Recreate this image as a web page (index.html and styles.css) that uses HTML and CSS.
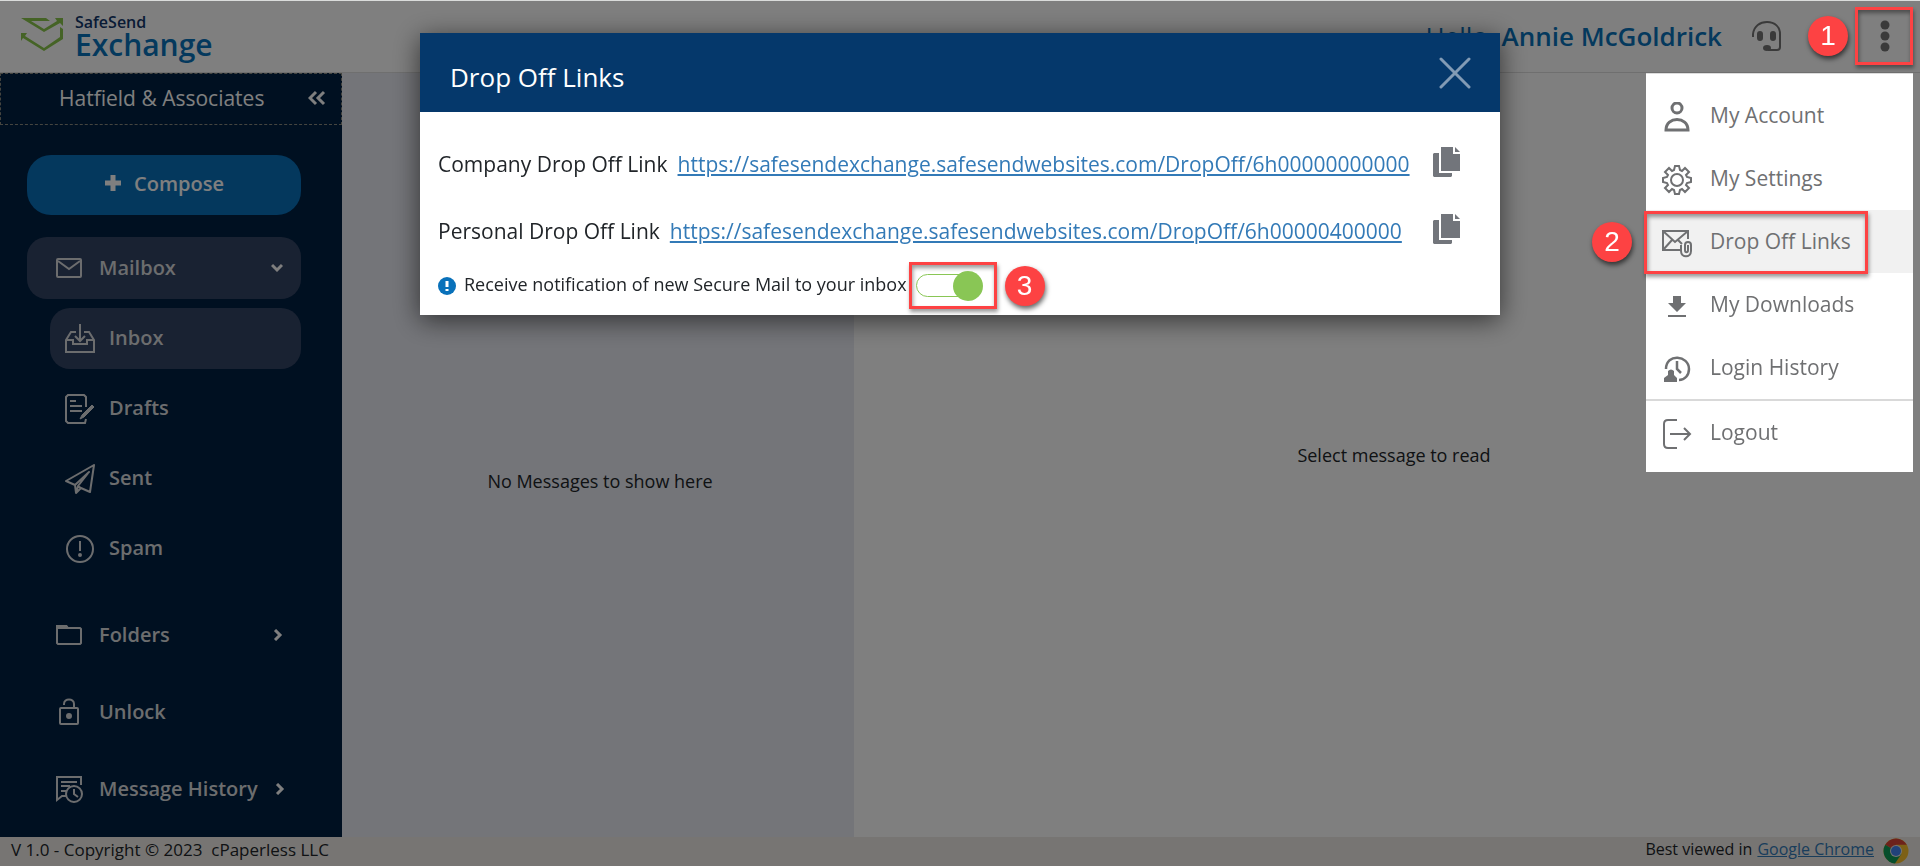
FILE: index.html
```html
<!DOCTYPE html>
<html lang="en">
<head>
    <meta charset="UTF-8">
    <meta name="viewport" content="width=device-width, initial-scale=1.0">
    <title>SafeSend Exchange</title>
    <link rel="stylesheet" href="styles.css">
</head>
<body>
    <div class="app">
        <header class="topbar">
            <a class="logo" href="#">
                <svg class="logo-mark" width="44" height="35" viewBox="0 0 44 35">
                    <path d="M1 1H26L30 4H11L24 12L37 4L35 1H43V9L40 6L24 15Z" fill="#8ac74c"/>
                    <path d="M1 16H7L5 19L24 31L40 20V10L43 12V22L24 34L3 21L1 24Z" fill="#8ac74c"/>
                </svg>
                <span class="logo-text">
                    <span class="logo-small">SafeSend</span>
                    <span class="logo-big">Exchange</span>
                </span>
            </a>
            <div class="user">
                <span class="greeting">Hello, <b>Annie McGoldrick</b></span>
                <button class="icon-btn" type="button" aria-label="Support">
                    <svg width="32" height="32" viewBox="0 0 32 32" fill="none" stroke="#757575" stroke-width="2">
                        <path d="M2 17V14C3 6 9 2 16 2C24 2 29 7 29 14V27C29 29 28 30 26 30H17"/>
                        <rect x="7" y="12" width="4" height="8" rx="2" fill="#757575"/>
                        <rect x="20" y="12" width="4" height="8" rx="2" fill="#757575"/>
                        <ellipse cx="16" cy="28" rx="3" ry="2" fill="#757575"/>
                    </svg>
                </button>
                <button class="icon-btn more" type="button" aria-label="Menu">
                    <svg width="12" height="32" viewBox="0 0 12 32" fill="#757575">
                        <circle cx="6" cy="5" r="4.5"/>
                        <circle cx="6" cy="16" r="4.5"/>
                        <circle cx="6" cy="27" r="4.5"/>
                    </svg>
                </button>
            </div>
        </header>

        <div class="content">
            <nav class="sidebar">
                <div class="company">
                    <span>Hatfield &amp; Associates</span>
                    <button class="icon-btn" type="button" aria-label="Collapse">
                        <svg width="18" height="16" viewBox="0 0 18 16" fill="none" stroke="#fff" stroke-width="3">
                            <path d="M8 2L2 8L8 14M16 2L10 8L16 14"/>
                        </svg>
                    </button>
                </div>

                <button class="compose" type="button">
                    <svg width="18" height="18" viewBox="0 0 18 18" fill="none" stroke="#fff" stroke-width="5">
                        <path d="M9 1V17M1 9H17"/>
                    </svg>
                    Compose
                </button>

                <a class="nav-item active" href="#">
                    <svg class="nav-icon" viewBox="0 0 30 30" fill="none" stroke="currentColor" stroke-width="2">
                        <rect x="3" y="6" width="24" height="18" rx="1"/>
                        <path d="M4 8L15 16L26 8"/>
                    </svg>
                    <span>Mailbox</span>
                    <svg class="arrow" viewBox="0 0 12 12" fill="none" stroke="#fff" stroke-width="3"><path d="M1 3L6 8L11 3"/></svg>
                </a>
                <div class="sub-nav">
                    <a class="nav-item active" href="#">
                        <svg class="nav-icon" viewBox="0 0 30 30" fill="none" stroke="currentColor" stroke-width="2">
                            <path d="M11 8H6L1 16V28H29V16L24 8H19M1 16H8V20H22V16H29M15 0V16M10 12L15 17L20 12"/>
                        </svg>
                        <span>Inbox</span>
                    </a>
                    <a class="nav-item" href="#">
                        <svg class="nav-icon" viewBox="0 0 30 30" fill="none" stroke="currentColor" stroke-width="2">
                            <path d="M21 13V3L19 1H3L1 3V27L3 29H20L21 25M5 7H11M5 12H17M5 17H17"/>
                            <path d="M17 21L27 11L29 13L19 23L15 25Z" fill="currentColor" stroke-width="1"/>
                        </svg>
                        <span>Drafts</span>
                    </a>
                    <a class="nav-item" href="#">
                        <svg class="nav-icon" viewBox="0 0 30 30" fill="none" stroke="currentColor" stroke-width="2" stroke-linejoin="round">
                            <path d="M29 1L1 17L10 21L11 29L16 24L25 28ZM10 21L24 8L13 22L11 29M13 22L16 24"/>
                        </svg>
                        <span>Sent</span>
                    </a>
                    <a class="nav-item" href="#">
                        <svg class="nav-icon" viewBox="0 0 30 30" fill="none" stroke="currentColor" stroke-width="2">
                            <circle cx="15" cy="15" r="13"/>
                            <path d="M15 7V17"/>
                            <circle cx="15" cy="21" r="1" fill="currentColor"/>
                        </svg>
                        <span>Spam</span>
                    </a>
                </div>
                <a class="nav-item" href="#">
                    <svg class="nav-icon" viewBox="0 0 30 30" fill="none" stroke="currentColor" stroke-width="2">
                        <path d="M3 6H12L14 8H26L27 9V23L26 24H4L3 23Z"/>
                        <path d="M3 5H13L15 9H3Z" fill="currentColor" stroke="none"/>
                    </svg>
                    <span>Folders</span>
                    <svg class="arrow" viewBox="0 0 12 12" fill="none" stroke="#fff" stroke-width="3"><path d="M4 1L9 6L4 11"/></svg>
                </a>
                <a class="nav-item" href="#">
                    <svg class="nav-icon" viewBox="0 0 30 30" fill="none" stroke="currentColor" stroke-width="2">
                        <rect x="6" y="11" width="18" height="16" rx="1"/>
                        <path d="M10 8V7C10 1 20 1 20 7V11"/>
                        <circle cx="15" cy="19" r="2" fill="currentColor"/>
                    </svg>
                    <span>Unlock</span>
                </a>
                <a class="nav-item" href="#">
                    <svg class="nav-icon" viewBox="0 0 30 30" fill="none" stroke="currentColor" stroke-width="2">
                        <path d="M27 11V3H3V26L8 22H12M7 8H23M7 12H16M7 17H12"/>
                        <circle cx="20" cy="20" r="8"/>
                        <path d="M20 15V20L24 23"/>
                    </svg>
                    <span>Message History</span>
                    <svg class="arrow" viewBox="0 0 12 12" fill="none" stroke="#fff" stroke-width="3"><path d="M4 1L9 6L4 11"/></svg>
                </a>
            </nav>

            <section class="message-list">No Messages to show here</section>
            <main class="reader">Select message to read</main>
        </div>

        <footer class="footer">
            <span>V 1.0 - Copyright © 2023 &nbsp;cPaperless LLC</span>
            <span class="browser">Best viewed in <a href="#">Google Chrome</a>
                <svg width="26" height="26" viewBox="0 0 26 26">
                    <circle cx="13" cy="13" r="12.5" fill="#fbc02d"/>
                    <path d="M13 13L2.2 6.8A12.5 12.5 0 0 1 23.8 6.8H13Z" fill="#db4437"/>
                    <path d="M13 13L2.2 6.8A12.5 12.5 0 0 0 12 25.5L18.4 16.1Z" fill="#0f9d58"/>
                    <circle cx="13" cy="13" r="6" fill="#e8e8e8"/>
                    <circle cx="13" cy="13" r="5" fill="#4285f4"/>
                </svg>
            </span>
        </footer>
    </div>

    <div class="backdrop"></div>

    <div class="modal" role="dialog" aria-labelledby="modalTitle">
        <div class="modal-header">
            <h1 id="modalTitle">Drop Off Links</h1>
            <button class="icon-btn" type="button" aria-label="Close">
                <svg width="32" height="32" viewBox="0 0 32 32" fill="none" stroke="#829bb5" stroke-width="3" stroke-linecap="round">
                    <path d="M2 2L30 30M30 2L2 30"/>
                </svg>
            </button>
        </div>
        <div class="modal-body">
            <div class="link-row">
                <span>Company Drop Off Link</span>
                <a href="#">https://safesendexchange.safesendwebsites.com/DropOff/6h00000000000</a>
                <button class="icon-btn copy" type="button" aria-label="Copy company link">
                    <svg width="28" height="30" viewBox="0 0 28 30" fill="#72757b">
                        <path d="M8 0H20V7H27V24H8Z"/>
                        <path d="M22 0L27 5H22Z"/>
                        <path d="M1 6H6V26H19V29L18 30H1L0 29V7Z"/>
                    </svg>
                </button>
            </div>
            <div class="link-row">
                <span>Personal Drop Off Link</span>
                <a href="#">https://safesendexchange.safesendwebsites.com/DropOff/6h00000400000</a>
                <button class="icon-btn copy" type="button" aria-label="Copy personal link">
                    <svg width="28" height="30" viewBox="0 0 28 30" fill="#72757b">
                        <path d="M8 0H20V7H27V24H8Z"/>
                        <path d="M22 0L27 5H22Z"/>
                        <path d="M1 6H6V26H19V29L18 30H1L0 29V7Z"/>
                    </svg>
                </button>
            </div>
            <div class="notify-row">
                <svg width="18" height="18" viewBox="0 0 18 18">
                    <circle cx="9" cy="9" r="9" fill="#0971ba"/>
                    <path d="M9 4V10M9 12V14" stroke="#fff" stroke-width="3"/>
                </svg>
                <label for="notify">Receive notification of new Secure Mail to your inbox</label>
                <span class="switch-box highlight">
                    <input class="switch" type="checkbox" id="notify" checked>
                </span>
                <span class="step">3</span>
            </div>
        </div>
    </div>

    <div class="menu">
        <a href="#">
            <svg viewBox="0 0 30 30" fill="none" stroke="currentColor" stroke-width="3">
                <circle cx="15" cy="6" r="5"/>
                <path d="M4 28C4 14 26 14 26 28Z"/>
            </svg>
            My Account
        </a>
        <a href="#">
            <svg viewBox="0 0 30 30" fill="none" stroke="currentColor" stroke-width="2">
                <circle cx="15" cy="15" r="6"/>
                <path d="M13 1H17L18 5L20 6L23 3L27 7L24 10L25 12L29 13V17L25 18L24 20L27 23L23 27L20 24L18 25L17 29H13L12 25L10 24L7 27L3 23L6 20L5 18L1 17V13L5 12L6 10L3 7L7 3L10 6L12 5Z"/>
            </svg>
            My Settings
        </a>
        <a class="selected" href="#">
            <svg viewBox="0 0 30 30" fill="none" stroke="currentColor" stroke-width="2">
                <path d="M18 22H1V3H26V11M1 3L13 14L26 3M1 22L10 12M16 12L20 16"/>
                <path d="M19 17V23C19 30 29 30 29 23V17C29 13 23 13 23 17V22C23 25 26 25 26 22V17"/>
            </svg>
            Drop Off Links
            <span class="menu-highlight highlight"></span>
            <span class="menu-step step">2</span>
        </a>
        <a href="#">
            <svg viewBox="0 0 30 30" fill="currentColor">
                <path d="M11 5H19V12H24L15 21L6 12H11ZM6 24H24V26H6Z"/>
            </svg>
            My Downloads
        </a>
        <a href="#">
            <svg viewBox="0 0 30 30" fill="none" stroke="currentColor" stroke-width="2.5">
                <path d="M4 15C4 -1 27 1 27 15C27 21 23 26 17 26M15 7V15L19 19"/>
                <path d="M2 28V24L6 21V17Q9 14 12 17V21L15 24V28Z" fill="currentColor" stroke="none"/>
            </svg>
            Login History
        </a>
        <a class="logout" href="#">
            <svg viewBox="0 0 30 30" fill="none" stroke="currentColor" stroke-width="2">
                <path d="M15 1H6Q2 1 2 5V25Q2 29 6 29H15M8 15H28M22 9L28 15L22 21"/>
            </svg>
            Logout
        </a>
    </div>

    <div class="more-step step">1</div>
    <div class="more-highlight highlight"></div>
</body>
</html>
```
FILE: styles.css
```css
* {
    box-sizing: border-box;
}
body {
    margin: 0;
    font-family: "Open Sans", sans-serif;
    font-size: 18px;
    color: #212529;
}
a {
    color: #337ab7;
}
button {
    font-family: inherit;
    border: 0;
    cursor: pointer;
}
svg {
    display: block;
    flex: none;
}
.icon-btn {
    background: none;
    padding: 0;
}
.app {
    display: flex;
    flex-direction: column;
    min-height: 100vh;
    border-top: 1px solid #dadcdb;
}

/* top bar */
.topbar {
    display: flex;
    justify-content: space-between;
    align-items: center;
    height: 72px;
    padding: 0 29px 2px 20px;
    background: #fff;
    border-bottom: 1px solid #dedede;
}
.logo {
    display: flex;
    gap: 11px;
    align-items: center;
    text-decoration: none;
    font-weight: 600;
}
.logo-mark {
    margin-bottom: 2px;
}
.logo-text {
    display: flex;
    flex-direction: column;
}
.logo-small {
    font-size: 16px;
    line-height: 18px;
    color: #12376b;
}
.logo-big {
    font-size: 30px;
    line-height: 28px;
    color: #0972bb;
}
.user {
    display: flex;
    align-items: center;
}
.greeting {
    font-size: 26px;
    color: #0972bb;
    margin-right: 29px;
}
.greeting b {
    font-weight: 600;
}
.more {
    margin-left: 96px;
}

/* main area */
.content {
    display: flex;
    flex: 1;
}
.sidebar {
    width: 342px;
    background: #002042;
    color: #fff;
    font-size: 20px;
}
.company {
    display: flex;
    justify-content: space-between;
    align-items: center;
    height: 52px;
    padding: 0 15px 2px 58px;
    border: 1px dashed #8b8b80;
    font-size: 21px;
}
.compose {
    display: flex;
    justify-content: center;
    align-items: center;
    gap: 12px;
    width: 274px;
    height: 60px;
    margin: 30px 0 22px 27px;
    padding: 0 0 4px;
    border-radius: 24px;
    background: #0870bb;
    color: #fff;
    font-size: 20px;
    font-weight: 600;
}
.nav-item {
    display: flex;
    align-items: center;
    gap: 15px;
    height: 62px;
    margin: 0 41px 15px 27px;
    padding: 0 18px 0 27px;
    border-radius: 20px;
    color: #d8dadd;
    font-weight: 600;
    text-decoration: none;
    white-space: nowrap;
}
.nav-item span {
    padding-bottom: 2px;
}
.nav-item.active {
    background: #334464;
}
.nav-icon {
    width: 30px;
    height: 30px;
}
.arrow {
    width: 12px;
    height: 12px;
    margin-left: auto;
}
.sub-nav {
    margin: -6px 0 25px;
}
.sub-nav .nav-item {
    height: 61px;
    margin: 0 41px 9px 50px;
    padding-left: 15px;
    gap: 14px;
}
.message-list,
.reader {
    display: flex;
    justify-content: center;
    align-items: center;
}
.message-list {
    width: 512px;
    padding: 52px 0 0 4px;
    background: #e8eaf2;
}
.reader {
    flex: 1;
    padding-left: 14px;
    background: #fff;
}
.footer {
    display: flex;
    justify-content: space-between;
    align-items: center;
    height: 29px;
    padding: 0 11px;
    background: #eeebe7;
    font-size: 17px;
}
.footer > span {
    padding-bottom: 5px;
}
.browser {
    display: flex;
    align-items: center;
    gap: 5px;
    font-size: 16px;
}
.browser svg {
    margin: 3px 0 0 4px;
}

/* dialog */
.backdrop {
    position: fixed;
    inset: 1px 0 0;
    background: rgba(0, 0, 0, 0.5);
}
.modal {
    position: fixed;
    top: 33px;
    left: 420px;
    right: 420px;
    background: #fff;
    box-shadow: 0 5px 25px rgba(0, 0, 0, 0.6);
}
.modal-header {
    display: flex;
    justify-content: space-between;
    align-items: center;
    height: 79px;
    padding: 0 29px 0 30px;
    background: #05386b;
    color: #fff;
}
.modal-header h1 {
    margin: 8px 0 0;
    font-size: 26px;
    font-weight: 400;
}
.modal-body {
    padding: 18px 18px 6px;
}
.link-row {
    display: flex;
    align-items: center;
    gap: 10px;
    height: 67px;
    font-size: 21px;
}
.copy {
    margin: 0 21px 3px auto;
}
.notify-row {
    display: flex;
    align-items: center;
    gap: 8px;
    height: 47px;
    margin-top: -2px;
}
.notify-row label {
    padding-bottom: 3px;
}
.switch-box {
    display: flex;
    align-items: center;
    width: 88px;
    height: 47px;
    margin-left: -6px;
    padding-left: 4px;
}
.switch {
    appearance: none;
    width: 66px;
    height: 23px;
    margin: 0;
    border: 1px solid #89c655;
    border-radius: 12px;
}
.switch::before {
    content: "";
    display: block;
    width: 30px;
    height: 30px;
    margin: -4px 0 0 36px;
    border-radius: 50%;
    background: #89c655;
}

/* account menu */
.menu {
    position: fixed;
    top: 73px;
    right: 7px;
    width: 267px;
    padding: 10px 0 8px;
    background: #fff;
    border-top: 1px solid #dcdcdc;
}
.menu a {
    position: relative;
    display: flex;
    align-items: center;
    gap: 18px;
    height: 63px;
    padding: 0 0 2px 16px;
    color: #6f7072;
    font-size: 21px;
    text-decoration: none;
}
.menu svg {
    width: 30px;
    height: 30px;
    margin-top: 4px;
}
.menu .selected {
    background: #f1f1f1;
}
.menu .logout {
    height: 65px;
    border-top: 2px solid #d9d9d9;
}

/* numbered steps */
.step {
    width: 40px;
    height: 40px;
    border-radius: 50%;
    background: #fd4243;
    box-shadow: 1px 3px 5px rgba(0, 0, 0, 0.6);
    color: #fff;
    font: 28px/40px "Liberation Sans", sans-serif;
    text-align: center;
}
.highlight {
    border: 3px solid #fd4243;
    box-shadow: 1px 3px 4px rgba(0, 0, 0, 0.4), inset 1px 3px 4px rgba(0, 0, 0, 0.4);
}
.menu-highlight {
    position: absolute;
    top: 1px;
    left: -2px;
    width: 224px;
    height: 63px;
}
.menu-step {
    position: absolute;
    top: 12px;
    left: -54px;
}
.more-step {
    position: fixed;
    top: 16px;
    right: 72px;
}
.more-highlight {
    position: fixed;
    top: 7px;
    right: 7px;
    width: 58px;
    height: 58px;
}
```
